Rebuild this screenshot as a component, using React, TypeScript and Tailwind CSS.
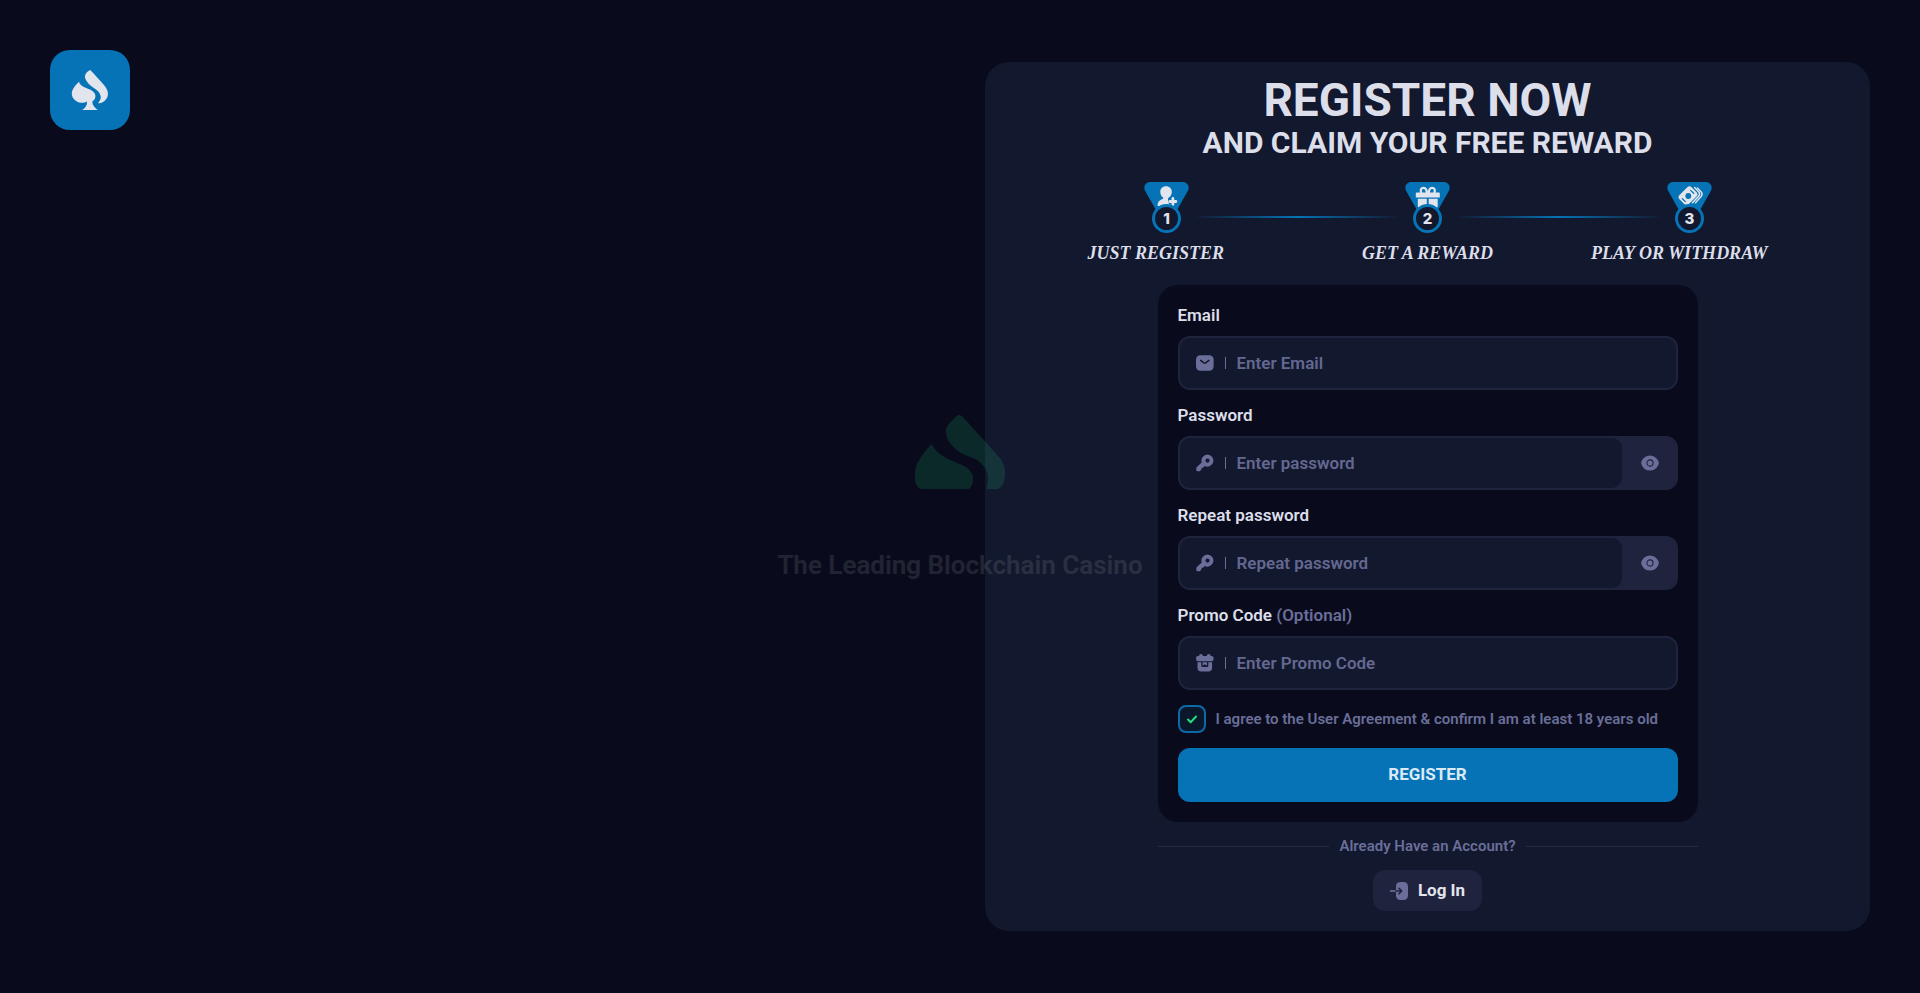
import React, { useState } from "react";

function SpadeLogo() {
  return (
    <svg viewBox="0 0 80 80" className="size-20" fill="#e3e5ee" aria-hidden="true">
      <path d="M40 20C42 21.5 49.500 30 54 35C57 38.500 58.500 42 57.800 45.500C57 49.500 53 53.300 48 53.300C49.800 51 51 49 50.700 46.500C50.300 43.500 48.500 41.300 46 39.500C43 37.300 40.500 35.800 38 33C35.500 30 34.400 27.500 35.200 25C36 22.700 38 21.300 40 20Z" />
      <path d="M29 31.700C29.800 34.500 32 36.300 35 37.400C39 39 42.500 40 44.500 43C46.300 46 45.500 49.500 42.400 51.300C42.200 55 44.500 57.500 47.700 60H32.300C35.500 57.500 37.300 55 37 51.400C34 53.200 30 53.300 26.500 51.200C23 49.200 21.500 46 21.800 43C22.200 39 25.800 34.500 29 31.700Z" />
    </svg>
  );
}

function Watermark() {
  return (
    <div className="pointer-events-none absolute inset-0 hidden flex-col items-center justify-center gap-[62px] lg:flex">
      <svg viewBox="0 0 90 74" className="h-[74px] w-[90px] opacity-[0.13]" fill="#24ee89" aria-hidden="true">
        <path d="M44 0C46 0 47.500 1.500 49 3.200L84 42C88 47 90 51 90 58C90 66 88 72 83 74H71.300C74 66 73.500 60 71 55C68.500 50 65 46.500 60 44L48 39C41 35.500 32 27 31 19C30.500 14 31 12.500 33.500 9.500L40.500 2C41.700 .8 42.800 0 44 0Z" />
        <path d="M16.700 29C20 36 27 41.500 34 44.500L47 50C54 53 58 58 58 64C58 68 57 71.500 54 74H6C2 72 0 69 0 63C-.3 57 .5 52 2.500 48C6 41 11 35 16.700 29Z" />
      </svg>
      <p className="text-[26px] font-semibold leading-7 text-white/10">The Leading Blockchain Casino</p>
    </div>
  );
}

function Medal({ value, children }: { value: string; children: React.ReactNode }) {
  return (
    <svg viewBox="0 0 45 51" className="h-[51px] w-[45px] shrink-0" aria-hidden="true">
      <path d="M6.500 0H38.500C43.500 0 46.200 4.800 43.800 9L32.500 29H12.500L1.200 9C-1.200 4.800 1.500 0 6.500 0Z" fill="#0573b6" />
      {children}
      <circle cx="22.500" cy="36.500" r="13" fill="#12182d" stroke="#0573b6" strokeWidth="3" />
      <text x="22.500" y="41.500" textAnchor="middle" fill="#e3e5ee" className="font-[Inter,sans-serif] text-[15px] font-extrabold">
        {value}
      </text>
    </svg>
  );
}

const UserPlusArt = () => (
  <g fill="#e3e5ee">
    <path d="M22 4.200C25.500 4.200 27.800 6.600 27.800 9.700C27.800 12.500 26.500 14.500 24.800 15.600C23.600 16.400 24 18 24.300 19C24.800 20.700 26 22.500 28 24H13.500C13.500 21 14.500 19 16.500 18C18.500 17 19.700 16.700 19.200 15.600C17.500 14.500 16.300 12.500 16.300 9.700C16.300 6.600 18.500 4.200 22 4.200Z" />
    <path d="M28.800 15.500V23.500M24.800 19.500H32.800" stroke="#0573b6" strokeWidth="5" />
    <path d="M28.900 16.500V22.500M25.900 19.500H31.900" stroke="#e3e5ee" strokeWidth="2.800" strokeLinecap="round" />
  </g>
);

const GiftArt = () => (
  <g fill="#e3e5ee">
    <path d="M21.800 11.500C21.800 7.500 20.500 5.900 18.600 5.900C15.600 5.900 14.800 9.500 16.800 11M23.800 11.500C23.800 7.500 25.100 5.900 27 5.900C30 5.900 30.800 9.500 28.800 11" fill="none" stroke="#e3e5ee" strokeWidth="2.200" />
    <path d="M10.800 11.500Q10.800 10.500 11.800 10.500H33.800Q34.800 10.500 34.800 11.500V15.500H10.800Z" />
    <path d="M12.800 16.700H21.800V26H14.500Q12.800 25.800 12.800 24ZM23.700 16.700H32.700V24Q32.700 25.800 31 26H23.700Z" />
  </g>
);

const CashArt = () => (
  <g>
    <rect x="12.500" y="7.200" width="17" height="13" rx="3" fill="#e3e5ee" transform="rotate(-45 21 13.700)" />
    <circle cx="21.300" cy="14" r="2.900" fill="#0573b6" />
    <path d="M23.600 8.400L26.700 11.300M15.300 16.700L18.400 19.600" stroke="#0573b6" strokeWidth="1.200" strokeLinecap="round" />
    <path d="M27.600 5.600L31.600 9.800Q33.600 12 31.600 14.200L25.500 20.800" fill="none" stroke="#e3e5ee" strokeWidth="1.500" strokeLinecap="round" />
    <path d="M30.400 6L34.200 9.900Q36 12 34.200 14.300L28.500 20.800" fill="none" stroke="#e3e5ee" strokeWidth="1.400" strokeLinecap="round" />
  </g>
);

const MailIcon = () => (
  <svg viewBox="0 0 18 18" className="size-[18px]" aria-hidden="true">
    <rect x="0" y="1.300" width="17.600" height="15.400" rx="4.200" fill="#6a6e99" />
    <path d="M4.700 6.400L7.500 8.600Q8.800 9.500 10.100 8.600L12.900 6.400" fill="none" stroke="#12182d" strokeWidth="1.500" strokeLinecap="round" />
  </svg>
);

const KeyIcon = () => (
  <svg viewBox="0 0 18 18" className="size-[18px]" aria-hidden="true">
    <path
      fill="#6a6e99"
      fillRule="evenodd"
      d="M11.500 .5A6.100 6.100 0 1 1 8.700 12.100L7.400 13.400Q7 13.800 6.400 13.800H5.600V14.800Q5.600 15.300 5.300 15.600L4.300 16.800Q3.900 17.300 3.300 17.300H1.500Q.3 17.300 .3 16.100V14.300Q.3 13.600 .8 13.100L5.700 8.400A6.100 6.100 0 0 1 11.500 .5ZM11.500 4.500A2.100 2.100 0 1 0 11.500 8.700A2.100 2.100 0 1 0 11.500 4.500Z"
    />
  </svg>
);

const PromoIcon = () => (
  <svg viewBox="0 0 18 18" className="size-[18px]" aria-hidden="true" fill="#6a6e99">
    <path d="M4.700 0C5.900 0 6.700 .7 6.900 1.900H10.700C10.900 .7 11.700 0 12.900 0C14.200 0 14.600 1 14.600 1.900H15.700Q17.500 1.900 17.500 3.600V5.600Q17.500 7.200 15.700 7.200H1.900Q.1 7.200 .1 5.600V3.600Q.1 1.900 1.900 1.900H3Q3 0 4.700 0Z" />
    <path fillRule="evenodd" d="M1.500 8.300H5.300V11.500Q5.300 13 6.800 13H10.800Q12.300 13 12.300 11.500V8.300H16.100V13.700Q16.100 17.500 12.400 17.500H5.200Q1.500 17.500 1.500 13.700Z" />
    <path d="M6.600 8.300H11V11.800L8.800 10.300L6.600 11.800Z" />
  </svg>
);

const EyeIcon = () => (
  <svg viewBox="0 0 18 18" className="size-[18px]" aria-hidden="true">
    <path d="M9 1.400C12.700 1.400 15.700 3.600 17.200 6.800Q18.400 9 17.200 11.200C15.700 14.400 12.700 16.600 9 16.600S2.300 14.400 .8 11.200Q-.4 9 .8 6.800C2.300 3.600 5.300 1.400 9 1.400Z" fill="#6a6e99" />
    <circle cx="9" cy="9" r="3.100" fill="none" stroke="#1f233e" strokeWidth="1.100" />
  </svg>
);

const LoginIcon = () => (
  <svg viewBox="0 0 18 18" className="size-[18px]" aria-hidden="true" fill="none">
    <rect x="6" y="0" width="12" height="18" rx="4.200" fill="#6a6e99" />
    <path d="M0 9H6" stroke="#6a6e99" strokeWidth="1.600" />
    <path d="M6 9H11.500M9 6.300L11.700 9L9 11.700" stroke="#1f233e" strokeWidth="1.600" strokeLinecap="round" strokeLinejoin="round" />
  </svg>
);

interface FieldProps {
  id: string;
  label: string;
  hint?: string;
  placeholder: string;
  icon: React.ReactNode;
  type?: string;
}

function Field({ id, label, hint, placeholder, icon, type = "text" }: FieldProps) {
  const [visible, setVisible] = useState(false);
  const secret = type === "password";
  return (
    <div className="flex flex-col gap-[11px]">
      <label htmlFor={id} className="text-[17px] font-semibold leading-5 text-[#dcdeea]">
        {label} {hint && <span className="text-[#6a6e99]">{hint}</span>}
      </label>
      <div className="flex h-[54px] rounded-xl border-2 border-[#1f233e] bg-[#1f233e]">
        <div className="flex min-w-0 flex-1 items-center rounded-[10px] bg-[#12182d] pl-4">
          {icon}
          <span className="ml-[11px] h-3 w-px bg-[#6a6e99]" />
          <input
            id={id}
            type={secret && visible ? "text" : type}
            placeholder={placeholder}
            className="h-full min-w-0 flex-1 bg-transparent px-[11px] text-[17px] font-semibold text-[#dcdeea] outline-none placeholder:text-[#646891]"
          />
        </div>
        {secret && (
          <button
            type="button"
            aria-label="Show or hide password"
            onClick={() => setVisible(!visible)}
            className="flex w-[54px] items-center justify-center pl-0.5"
          >
            <EyeIcon />
          </button>
        )}
      </div>
    </div>
  );
}

const StepLine = () => (
  <span className="mx-1 mt-[18px] h-0.5 flex-1 bg-linear-to-r from-transparent via-[#0573b6] to-transparent" />
);

export default function App() {
  return (
    <main className="relative grid min-h-screen grid-cols-1 gap-[50px] bg-[#090b1c] p-[50px] font-[Roboto,sans-serif] lg:grid-cols-2">
      <a href="#home" aria-label="Home" className="size-20 rounded-[20px] bg-[#0573b6]">
        <SpadeLogo />
      </a>

      <section className="flex flex-col items-center self-center rounded-3xl bg-[#12182d] px-5 pt-4 pb-5">
        <h1 className="text-center font-bold text-[#dcdeea]">
          <span className="block text-[46px] leading-[44px]">REGISTER NOW</span>
          <span className="block text-3xl leading-[42px]">AND CLAIM YOUR FREE REWARD</span>
        </h1>

        <div className="mt-[18px] w-full max-w-[680px]">
          <div className="flex items-center px-14">
            <Medal value="1"><UserPlusArt /></Medal>
            <StepLine />
            <Medal value="2"><GiftArt /></Medal>
            <StepLine />
            <Medal value="3"><CashArt /></Medal>
          </div>
          <ol className="mt-2 grid grid-cols-3 font-['Liberation_Serif',serif] text-lg leading-6 font-bold text-[#dcdeea] italic">
            <li>JUST REGISTER</li>
            <li className="text-center">GET A REWARD</li>
            <li className="text-right">PLAY OR WITHDRAW</li>
          </ol>
        </div>

        <form
          onSubmit={(e) => e.preventDefault()}
          className="mt-5 flex w-full max-w-[540px] flex-col gap-[15px] rounded-[20px] bg-[#090b1c] p-5"
        >
          <Field id="email" type="email" label="Email" placeholder="Enter Email" icon={<MailIcon />} />
          <Field id="password" type="password" label="Password" placeholder="Enter password" icon={<KeyIcon />} />
          <Field id="repeat" type="password" label="Repeat password" placeholder="Repeat password" icon={<KeyIcon />} />
          <Field id="promo" label="Promo Code" hint="(Optional)" placeholder="Enter Promo Code" icon={<PromoIcon />} />
          <label className="flex items-center gap-2.5 text-[15px] font-semibold text-[#6a6e99]">
            <span className="grid size-7 shrink-0">
              <input
                type="checkbox"
                defaultChecked
                className="peer col-start-1 row-start-1 size-7 appearance-none rounded-lg border-2 border-[#0b6aa9] bg-[#0b182c]"
              />
              <svg viewBox="0 0 28 28" className="pointer-events-none invisible col-start-1 row-start-1 size-7 peer-checked:visible" aria-hidden="true">
                <path d="M10 14.500L12.700 17.200L18 11.500" fill="none" stroke="#22dd80" strokeWidth="2" strokeLinecap="round" strokeLinejoin="round" />
              </svg>
            </span>
            <span>I agree to the User Agreement &amp; confirm I am at least 18 years old</span>
          </label>
          <button type="submit" className="h-[54px] rounded-xl bg-[#0573b6] text-[17px] font-bold text-[#dceaf6]">
            REGISTER
          </button>
        </form>

        <div className="mt-[15px] flex w-full max-w-[540px] items-center gap-2.5">
          <span className="h-px flex-1 bg-[#262a45]" />
          <span className="text-[15px] leading-[18px] font-semibold text-[#6a6e99]">Already Have an Account?</span>
          <span className="h-px flex-1 bg-[#262a45]" />
        </div>

        <button
          type="button"
          className="mt-[15px] flex h-[41px] items-center gap-2.5 rounded-xl bg-[#1f233e] px-[17px] text-[17px] font-bold text-[#e3e5ee]"
        >
          <LoginIcon />
          Log In
        </button>
      </section>

      <Watermark />
    </main>
  );
}
